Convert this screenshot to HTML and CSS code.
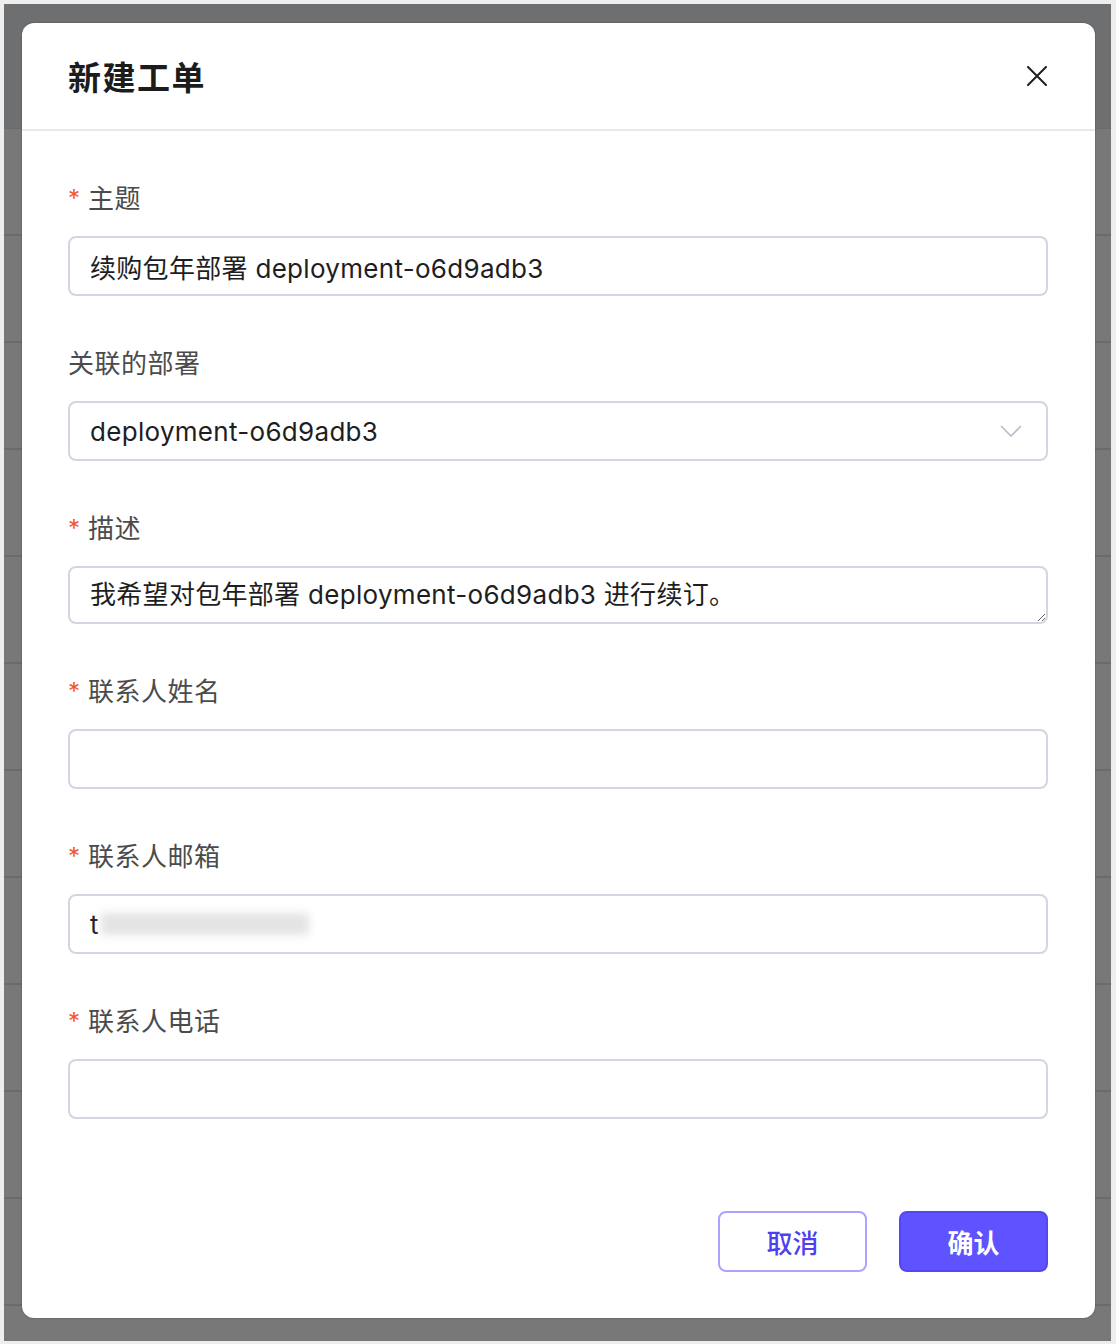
FILE: index.html
```html
<!DOCTYPE html>
<html lang="zh-CN">
<head>
<meta charset="utf-8">
<title>新建工单</title>
<link rel="stylesheet" href="styles.css">
</head>
<body>
<div class="backdrop">
  <div class="modal">
    <div class="modal-header">
      <h1 class="modal-title">新建工单</h1>
      <button class="close-btn" aria-label="关闭">
        <svg width="20" height="20" viewBox="0 0 20 20"><path d="M1 1 L19 19 M19 1 L1 19" stroke="#1f1f1f" stroke-width="2" stroke-linecap="round" fill="none"/></svg>
      </button>
    </div>
    <form class="modal-body">
      <div class="field">
        <label class="label required">主题</label>
        <input class="input" type="text" value="续购包年部署 deployment-o6d9adb3">
      </div>
      <div class="field">
        <label class="label">关联的部署</label>
        <div class="input select">
          <span>deployment-o6d9adb3</span>
          <svg class="chevron" width="22" height="12" viewBox="0 0 22 12"><path d="M1 1 L11 11 L21 1" stroke="#b9bccb" stroke-width="1.6" fill="none"/></svg>
        </div>
      </div>
      <div class="field">
        <label class="label required">描述</label>
        <textarea class="input textarea">我希望对包年部署 deployment-o6d9adb3 进行续订。</textarea>
      </div>
      <div class="field">
        <label class="label required">联系人姓名</label>
        <input class="input" type="text" value="">
      </div>
      <div class="field">
        <label class="label required">联系人邮箱</label>
        <div class="input masked">
          <span>t</span><span class="blur"></span>
        </div>
      </div>
      <div class="field">
        <label class="label required">联系人电话</label>
        <input class="input" type="text" value="">
      </div>
      <div class="footer">
        <button type="button" class="btn btn-cancel">取消</button>
        <button type="button" class="btn btn-primary">确认</button>
      </div>
    </form>
  </div>
</div>
</body>
</html>
```

FILE: styles.css
```css
* { box-sizing: border-box; }
html, body { margin: 0; padding: 0; }
body {
  background: #eeeeee;
  font-family: "Inter", "Noto Sans CJK SC", sans-serif;
  width: 1116px;
  height: 1344px;
  padding: 4px 5px 3px 4px;
}
.backdrop {
  height: 100%;
  background-color: #787878;
  background-image:
    linear-gradient(to bottom, #6e6f71 0, #6e6f71 124px, transparent 124px),
    repeating-linear-gradient(to bottom, transparent 0, transparent 16px, #6b6b6d 16px, #6b6b6d 18px, transparent 18px, transparent 107px);
  padding: 19px 16px 22px 18px;
}
.modal {
  background: #ffffff;
  border-radius: 12px;
  height: 1295px;
  display: flex;
  flex-direction: column;
  box-shadow: 0 0 2px rgba(0,0,0,0.35);
}
.modal-header {
  height: 108px;
  border-bottom: 2px solid #e6e9ef;
  display: flex;
  align-items: center;
  justify-content: space-between;
  padding: 0 46px 0 46px;
}
.modal-title {
  margin: 0;
  font-size: 33px;
  font-weight: 700;
  color: #1c1c1c;
  letter-spacing: 1.5px;
}
.close-btn {
  border: none;
  background: none;
  padding: 0;
  width: 20px;
  height: 20px;
  margin-right: 2px;
  display: flex;
}
.modal-body {
  flex: 1;
  display: flex;
  flex-direction: column;
  padding: 50px 47px 46px 46px;
  margin: 0;
}
.field {
  display: flex;
  flex-direction: column;
  margin-bottom: 50px;
}
.label {
  font-size: 26px;
  line-height: 36px;
  color: #4b4b4b;
  margin-bottom: 19px;
  position: relative;
  letter-spacing: 0.5px;
}
.label.required { padding-left: 20px; }
.label.required::before {
  content: "*";
  position: absolute;
  left: 0;
  top: 0;
  color: #f05a2a;
  font-size: 24px;
}
.input {
  width: 100%;
  height: 60px;
  border: 2px solid #d3d6e2;
  border-radius: 8px;
  padding: 0 20px;
  font-family: inherit;
  font-size: 26px;
  letter-spacing: 0.3px;
  color: #1e1e22;
  background: #ffffff;
  outline: none;
  display: flex;
  align-items: center;
}
.select {
  justify-content: space-between;
  padding-right: 24px;
}
.chevron { display: block; }
.textarea {
  height: 58px;
  resize: vertical;
  line-height: 34px;
  padding: 10px 20px;
  display: block;
  overflow: hidden;
}
.masked { position: relative; }
.blur {
  background: #e4e4e4;
  filter: blur(4px);
  height: 22px;
  width: 208px;
  margin-left: 2px;
  display: inline-block;
}
.footer {
  margin-top: auto;
  display: flex;
  justify-content: flex-end;
  gap: 32px;
}
.btn {
  width: 149px;
  height: 61px;
  border-radius: 8px;
  font-family: inherit;
  font-size: 26px;
  font-weight: 500;
}
.btn-cancel {
  background: #ffffff;
  border: 2px solid #aaa4ff;
  color: #4f3ff0;
}
.btn-primary {
  background: #5f52ff;
  border: 2px solid #5546f5;
  color: #ffffff;
  font-weight: 700;
}
```
